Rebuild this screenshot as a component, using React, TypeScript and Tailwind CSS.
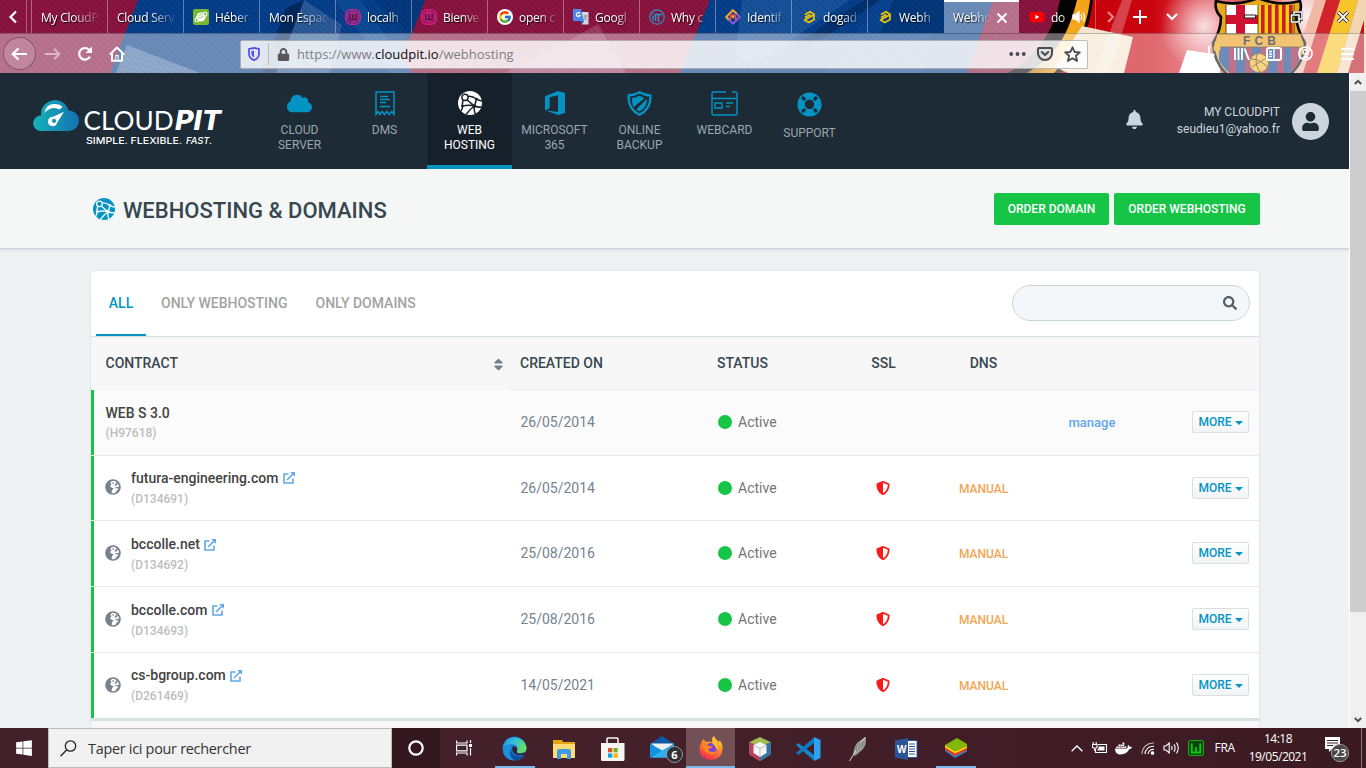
import React from "react";
import {
  FaBell,
  FaCloud,
  FaDocker,
  FaLifeRing,
  FaLock,
  FaSearch,
  FaShieldAlt,
  FaSort,
  FaUser,
  FaWindows,
  FaYoutube,
} from "react-icons/fa";
import { FcGoogle } from "react-icons/fc";

/* ---------- Browser theme artwork ---------- */

function ThemeArt() {
  return (
    <svg className="absolute inset-0" width="1366" height="73" viewBox="0 0 1366 73">
      <defs>
        <pattern id="hatch" width="6" height="6" patternUnits="userSpaceOnUse">
          <path d="M-1 -1L7 7M-1 5L1 7M5 -1L7 1" stroke="#000" strokeOpacity=".24" strokeWidth=".8" />
        </pattern>
        <linearGradient id="red" x1="0" x2="1">
          <stop offset="0" stopColor="#c40006" />
          <stop offset=".3" stopColor="#cb0510" />
          <stop offset=".48" stopColor="#dc3a46" />
          <stop offset=".8" stopColor="#f0a8a8" />
          <stop offset="1" stopColor="#c81420" />
        </linearGradient>
        <linearGradient id="gold" x1="0" x2="1">
          <stop offset="0" stopColor="#b96800" />
          <stop offset=".1" stopColor="#f7a81c" />
          <stop offset="1" stopColor="#c97400" />
        </linearGradient>
        <radialGradient id="glow" cx=".5" cy=".5" r=".5">
          <stop offset="0" stopColor="#fff" stopOpacity=".85" />
          <stop offset="1" stopColor="#fff" stopOpacity="0" />
        </radialGradient>
        <clipPath id="crestClip">
          <path d="M1217 3H1299L1296 17L1303 44Q1302 66 1287 74H1231Q1215 62 1215 44L1222 17Z" />
        </clipPath>
      </defs>
      <rect width="1366" height="73" fill="#8b1540" />
      <path d="M138 0H425L395 73H110Z" fill="#063f8b" />
      <path d="M710 0H993L967 73H680Z" fill="#063f8b" />
      <path d="M127 45L200 73H116Z" fill="#456fa8" />
      <path d="M304 0L342 25L330 73H276Z" fill="#2b5a9b" />
      <path d="M286 8L304 0L276 73H262Z" fill="#03295f" />
      <path d="M335 0H360L412 73H390Z" fill="#0c4b98" />
      <path d="M375 0H425L410 38Z" fill="#04397f" />
      <path d="M570 40L598 24L626 73H505Z" fill="#a03a61" />
      <path d="M742 0H850L752 66L735 55Z" fill="#17529a" />
      <path d="M864 0L880 0L794 58L780 54Z" fill="#03306f" />
      <path d="M880 0H940L922 73H824Z" fill="#084491" />
      <path d="M893 0H944V33H880Z" fill="#04387d" />
      <rect width="1090" height="73" fill="url(#hatch)" />
      <path d="M1060 0H1366V73H1008C1040 53 1054 29 1060 0Z" fill="#050303" />
      <path d="M1077 0H1366V73H1027C1060 54 1070 28 1077 0Z" fill="url(#gold)" />
      <path d="M1090 0H1366V73H1054C1078 48 1087 26 1090 0Z" fill="#140400" />
      <path d="M1093 0H1366V73H1061C1083 47 1090 26 1093 0Z" fill="url(#red)" />
      <path d="M1082 26L1133 37L1124 73H1068L1055 67Z" fill="#f4e5ce" />
      <path d="M1112 26L1122 0H1132L1110 73H1095Z" fill="#fff" opacity=".25" />
      <path d="M1187 50L1220 55V73H1179Z" fill="#fff" />
      <ellipse cx="1204" cy="26" rx="44" ry="46" fill="url(#glow)" />
      <ellipse cx="1309" cy="16" rx="36" ry="40" fill="url(#glow)" />
      <path d="M1315 0H1326L1305 73H1290Z" fill="#f2b8a6" />
      <path d="M1340 0H1358L1337 73H1317Z" fill="#f7c52a" />
      <path d="M1326 0H1340L1317 73H1303Z" fill="#d1242a" />
      <path d="M1358 0H1366V73H1337Z" fill="#f2d6b4" />
      <path d="M1364 20V73H1348Z" fill="#b91420" />
      {/* club crest */}
      <path
        d="M1216 1Q1237 7 1258 -2Q1280 7 1300 1Q1303 11 1296 17Q1297 29 1305 43Q1304 64 1288 76H1229Q1214 64 1213 43Q1221 30 1221 17Q1214 10 1216 1Z"
        fill="#eaa81f"
        stroke="#060606"
        strokeWidth="2.6"
      />
      <g clipPath="url(#crestClip)">
        <rect x="1226" y="5" width="32" height="29" fill="#fff" />
        <rect x="1236" y="5" width="9" height="29" fill="#ce1130" />
        <rect x="1226" y="15" width="32" height="9" fill="#ce1130" />
        <rect x="1258" y="5" width="36" height="29" fill="#f6d20d" />
        {[1261, 1268, 1275, 1282, 1289].map((x) => (
          <rect key={x} x={x} y="5" width="3.6" height="29" fill="#d01c28" />
        ))}
        <rect x="1214" y="34" width="90" height="13" fill="#e99c16" />
        <rect x="1219" y="47" width="80" height="27" fill="#0a3f8c" />
        {[1229, 1245, 1261, 1277, 1291].map((x) => (
          <rect key={x} x={x} y="47" width="7" height="27" fill="#93163f" />
        ))}
      </g>
      <path d="M1226 5V34M1258 5V34M1294 5V34M1218 34H1300M1216 47H1303" stroke="#3a2500" strokeWidth=".8" />
      <text x="1243" y="45" fontSize="12" fontWeight="700" fontFamily="Liberation Sans, sans-serif" fill="#0c0c0c" textLength="33">
        FCB
      </text>
      <circle cx="1259" cy="63" r="9.5" fill="#f2b735" stroke="#6b4100" strokeWidth="1" />
      <path d="M1251 59Q1260 59 1267 67M1252 67Q1260 62 1266 58M1257 54Q1254 64 1260 72" stroke="#5a3600" strokeWidth="1" fill="none" />
      <circle cx="1217" cy="48" r="3.5" fill="#f5a300" />
    </svg>
  );
}

/* ---------- Favicons ---------- */

const HostIcon = () => (
  <svg width="16" height="16" viewBox="0 0 16 16">
    <rect width="16" height="16" rx="2" fill="#78b833" />
    <ellipse cx="8" cy="8" rx="7" ry="2.4" transform="rotate(-35 8 8)" fill="none" stroke="#fff" strokeWidth="1.1" />
    <circle cx="8" cy="8" r="4.5" fill="#fff" />
    <path d="M5.5 6.5Q8 6 10 4.8M5 9Q8 9 11.2 7" stroke="#78b833" strokeWidth=".7" fill="none" />
  </svg>
);
const WampIcon = () => (
  <svg width="16" height="16" viewBox="0 0 16 16">
    <rect x=".8" y=".8" width="14.4" height="14.4" rx="5" fill="none" stroke="#d01f86" strokeWidth="1.6" />
    <circle cx="8" cy="8" r="6.2" fill="#d01f86" fillOpacity=".75" />
    <path d="M4.8 5V10.6H11.2V5M8 5.6V10.6" fill="none" stroke="#4a1440" strokeWidth="1.4" />
  </svg>
);
const GoogleIcon = () => (
  <div className="flex h-4 w-4 items-center justify-center rounded-full bg-white">
    <FcGoogle size={14} />
  </div>
);
const TranslateIcon = () => (
  <svg width="16" height="16" viewBox="0 0 16 16">
    <path d="M7 3H15.5V15.5H9Z" fill="#d6d8db" />
    <path d="M0 0H8L11 12H0Z" fill="#4b87ee" />
    <path d="M7.2 12H11L9 15.5Z" fill="#2b5fc0" />
    <path d="M7 4.4A2 2 0 1 0 7.2 6.5H5.2" fill="none" stroke="#fff" strokeWidth="1.1" />
    <path d="M10.8 7H14.7M12.7 6V7Q12.7 10 10.7 11M11.6 8.5Q12.5 10.5 14.5 11.3" fill="none" stroke="#7a7f85" strokeWidth=".8" />
  </svg>
);
const ItIcon = () => (
  <svg width="16" height="16" viewBox="0 0 16 16" fill="none" stroke="#2596c7">
    <circle cx="8" cy="8" r="7.2" strokeWidth="1.2" />
    <path d="M4.2 6.5V11.5M6.6 12V5.5H13M9.5 5.5V13" strokeWidth="1.5" />
    <path d="M4.2 4V5" strokeWidth="1.5" />
  </svg>
);
const IdIcon = () => (
  <svg width="16" height="16" viewBox="0 0 16 16" fill="none">
    <path d="M4 11L1.2 8L8 1.2L12 5" stroke="#f5a13a" strokeWidth="2.1" strokeLinejoin="round" />
    <path d="M12 5L14.8 8L8 14.8L4 11" stroke="#8258d8" strokeWidth="2.1" strokeLinejoin="round" />
    <path d="M5.5 11V8A2.6 2.6 0 0 1 10.6 8V11" stroke="#ef5350" strokeWidth="1.8" />
    <circle cx="8" cy="8" r="1.2" fill="#ffb347" />
  </svg>
);
const DogadoIcon = () => (
  <svg width="16" height="16" viewBox="0 0 16 16" fill="none" stroke="#f2c500" strokeWidth="1.7" strokeLinejoin="round">
    <path d="M4 5.5L9 2.7L13 5.2V10.5L8 13.4L3.5 11L12 6.2M4 8.4L9.3 5.5" />
  </svg>
);
const TubeIcon = () => (
  <span className="relative flex h-4 w-4 items-center justify-center">
    <span className="absolute h-1.5 w-2 bg-white" />
    <FaYoutube className="relative" size={16} color="#ff0000" />
  </span>
);

interface TabInfo {
  label: string;
  icon?: React.FC;
  active?: boolean;
  audio?: boolean;
}

const browserTabs: TabInfo[] = [
  { label: "My CloudP" },
  { label: "Cloud Serv" },
  { label: "Héber", icon: HostIcon },
  { label: "Mon Espac" },
  { label: "localh", icon: WampIcon },
  { label: "Bienve", icon: WampIcon },
  { label: "open c", icon: GoogleIcon },
  { label: "Googl", icon: TranslateIcon },
  { label: "Why c", icon: ItIcon },
  { label: "Identif", icon: IdIcon },
  { label: "dogad", icon: DogadoIcon },
  { label: "Webh", icon: DogadoIcon },
  { label: "Webho", active: true },
  { label: "do", icon: TubeIcon, audio: true },
];

function BrowserTab({ tab }: { tab: TabInfo }) {
  const Icon = tab.icon;
  return (
    <div
      className={
        tab.active
          ? "ml-px flex h-[33px] w-[75px] shrink-0 items-center border-t-2 border-white bg-white/40 pr-[11px] pl-[9px]"
          : tab.audio
            ? "flex h-[33px] w-[76px] shrink-0 items-center pr-2 pl-[10px]"
            : "flex h-[33px] w-[76px] shrink-0 items-center border-l border-white/35 pr-1 pl-[9px]"
      }
    >
      {Icon && (
        <span className="mr-1.5 flex h-4 w-4 shrink-0 items-center">
          <Icon />
        </span>
      )}
      <span
        className={
          tab.active
            ? "min-w-0 flex-1 text-[12px] leading-5 tracking-[-0.3px] whitespace-nowrap text-white [mask-image:linear-gradient(to_right,black_50%,transparent_100%)] [text-shadow:1px_1px_1px_rgba(0,0,0,.8)]"
            : "min-w-0 flex-1 pt-0.5 text-[12px] leading-5 tracking-[-0.25px] whitespace-nowrap text-white [mask-image:linear-gradient(to_right,black_50%,transparent_98%)] [text-shadow:1px_1px_1px_rgba(0,0,0,.8)]"
        }
      >
        {tab.label}
      </span>
      {tab.active && (
        <svg className="ml-1 shrink-0" width="12" height="12" viewBox="0 0 12 12">
          <path d="M1.5 1.5L10.5 10.5M10.5 1.5L1.5 10.5" stroke="#fff" strokeWidth="1.9" />
        </svg>
      )}
      {tab.audio && (
        <svg className="shrink-0" width="15" height="14" viewBox="0 0 15 14" fill="none" stroke="#fff" strokeWidth="1.3">
          <path d="M1 5H3.5L7 2V12L3.5 9H1Z" fill="#fff" />
          <path d="M9 4.5Q10.6 7 9 9.5M11 2.5Q14 7 11 11.5" />
        </svg>
      )}
    </div>
  );
}

function BrowserChrome() {
  return (
    <div className="relative h-[73px] w-full shrink-0 font-['Open_Sans',sans-serif]">
      <ThemeArt />
      <div className="relative flex h-[33px]">
        <div className="flex w-[27px] items-center justify-center border-r border-white/30">
          <svg width="10" height="14" viewBox="0 0 10 14">
            <path d="M8 1.5L2.5 7L8 12.5" fill="none" stroke="#fff" strokeWidth="2.2" />
          </svg>
        </div>
        <div className="w-1" />
        {browserTabs.map((t, i) => (
          <BrowserTab key={i} tab={t} />
        ))}
        <div className="flex items-center border-l border-white/30 pl-[11px]">
          <svg width="8" height="12" viewBox="0 0 8 12">
            <path d="M1 1L6 6L1 11" fill="none" stroke="#fff" strokeOpacity=".55" strokeWidth="2" />
          </svg>
          <svg className="ml-[18px]" width="14" height="14" viewBox="0 0 14 14">
            <path d="M7 0V14M0 7H14" stroke="#fff" strokeWidth="2" />
          </svg>
          <svg className="ml-[19px]" width="12" height="8" viewBox="0 0 12 8">
            <path d="M1 1L6 6L11 1" fill="none" stroke="#fff" strokeWidth="2.2" />
          </svg>
          <svg className="ml-[66px]" width="12" height="6" viewBox="0 0 12 6">
            <path d="M.5 1H11.5V4H.5Z" fill="#fff" stroke="#222" strokeWidth="1" />
          </svg>
          <svg className="ml-[34px]" width="13" height="12" viewBox="0 0 13 12" fill="none">
            <path d="M4 3V1H12V8H9M1.5 4H9V11H1.5Z" stroke="#222" strokeWidth="3.4" />
            <path d="M4 3V1H12V8H9M1.5 4H9V11H1.5Z" stroke="#fff" strokeWidth="1.5" />
          </svg>
          <svg className="ml-[34px]" width="12" height="12" viewBox="0 0 12 12">
            <path d="M1 1L11 11M11 1L1 11" stroke="#222" strokeWidth="3.6" />
            <path d="M1 1L11 11M11 1L1 11" stroke="#fff" strokeWidth="1.8" />
          </svg>
        </div>
      </div>
      <div className="relative flex h-10 items-center border-t border-black/25 bg-white/40 pl-[3px]">
        <div className="flex h-[33px] w-[33px] shrink-0 items-center justify-center rounded-full border border-black/35 bg-white/15">
          <svg width="17" height="14" viewBox="0 0 17 14">
            <path d="M16 7H2M7.5 1.2L1.7 7L7.5 12.8" fill="none" stroke="#fff" strokeWidth="2.1" />
          </svg>
        </div>
        <svg className="ml-[9px] shrink-0" width="16" height="14" viewBox="0 0 17 14">
          <path d="M0 7H14M9.5 1.2L15.3 7L9.5 12.8" fill="none" stroke="#fff" strokeOpacity=".5" strokeWidth="2" />
        </svg>
        <svg className="ml-4 shrink-0" width="16" height="16" viewBox="0 0 16 16">
          <path d="M13 10.6A5.8 5.8 0 1 1 12.3 4" fill="none" stroke="#fff" strokeWidth="2.2" />
          <path d="M15 .5V7H8.5Z" fill="#fff" />
        </svg>
        <svg className="ml-4 shrink-0" width="16" height="16" viewBox="0 0 16 16">
          <path d="M.7 8.6L8 1.5L15.3 8.6M3 7V14.7H13V7" fill="none" stroke="#fff" strokeWidth="2" strokeLinejoin="round" />
          <path d="M6.3 9H9.7V15H6.3Z" fill="#fff" />
          <rect x="7.3" y="10.2" width="1.4" height="3.6" fill="#6c8bb6" />
        </svg>
        <div className="mt-px ml-[115px] flex h-[29px] w-[848px] shrink-0 items-center rounded-[2px] border border-black/25 bg-white/80 pl-[7px]">
          <svg width="12" height="14" viewBox="0 0 12 14">
            <path d="M6 .9L11 2V7Q11 11 6 13.2Q1 11 1 7V2Z" fill="none" stroke="#5a4be0" strokeWidth="1.7" />
            <path d="M6 3.4V10.6Q3.4 9 3.4 7V4Z" fill="#4759e4" />
          </svg>
          <div className="ml-2 h-[22px] w-px bg-gray-400/60" />
          <FaLock className="ml-[8px]" size={13} color="#58585c" />
          <span className="ml-[7px] text-[13px] leading-5 text-[#7f7f84]">
            https://www.<span className="text-[#0c0c0d]">cloudpit.io</span>/webhosting
          </span>
          <div className="ml-auto flex items-center gap-[11px] pr-[6px]">
            <svg width="17" height="4" viewBox="0 0 17 4" fill="#4a4a4f">
              <circle cx="2.2" cy="2" r="1.9" />
              <circle cx="8.5" cy="2" r="1.9" />
              <circle cx="14.8" cy="2" r="1.9" />
            </svg>
            <svg width="16" height="14" viewBox="0 0 16 14" fill="none" stroke="#4a4a4f" strokeWidth="2" strokeLinecap="round" strokeLinejoin="round">
              <path d="M2 1H14Q15 1 15 2V6A7 7 0 0 1 1 6V2Q1 1 2 1Z" />
              <path d="M4.8 5L8 8L11.2 5" />
            </svg>
            <svg width="17" height="17" viewBox="0 0 17 17">
              <path d="M8.5 1.3L10.6 6L15.8 6.4L11.9 9.8L13.1 15L8.5 12.2L3.9 15L5.1 9.8L1.2 6.4L6.4 6Z" fill="none" stroke="#4a4a4f" strokeWidth="1.8" strokeLinejoin="round" />
            </svg>
          </div>
        </div>
        <svg className="ml-auto" width="12" height="16" viewBox="0 0 12 16">
          <path d="M6 0V13M.8 8L6 13.2L11.2 8" fill="none" stroke="#fff" strokeWidth="2" />
        </svg>
        <svg className="ml-[19px]" width="16" height="14" viewBox="0 0 16 14">
          <path d="M1 1V13M4.5 1V13M8 1V13M10.5 1.5L15 13" stroke="#fff" strokeWidth="1.9" />
        </svg>
        <svg className="ml-4" width="16" height="14" viewBox="0 0 16 14">
          <rect x="1" y="1" width="14" height="12" rx="2" fill="none" stroke="#fff" strokeWidth="2" />
          <path d="M8 1V13M3 4.5H6M3 7H6M3 9.5H6" stroke="#fff" strokeWidth="1.3" />
        </svg>
        <svg className="ml-4" width="15" height="15" viewBox="0 0 15 15">
          <circle cx="7.5" cy="7.5" r="6.5" fill="none" stroke="#fff" strokeWidth="1.7" />
          <circle cx="7.5" cy="6" r="2.5" fill="none" stroke="#fff" strokeWidth="1.4" />
          <path d="M3.5 12Q7.5 8 11.5 12Z" fill="#fff" />
        </svg>
        <svg className="mr-[12px] ml-[28px]" width="13" height="12" viewBox="0 0 13 12">
          <path d="M0 1H13M0 6H13M0 11H13" stroke="#fff" strokeWidth="2" />
        </svg>
      </div>
    </div>
  );
}

/* ---------- Site header ---------- */

function Logo() {
  return (
    <svg width="192" height="50" viewBox="0 0 192 50">
      <defs>
        <linearGradient id="cloudFill" x1="0" x2="1">
          <stop offset="0" stopColor="#14b3b8" />
          <stop offset="1" stopColor="#1670b0" />
        </linearGradient>
      </defs>
      <path d="M7 32A7.8 7.8 0 0 1 6.5 16.6Q8.5 17 8 14.5A14 14 0 0 1 35.5 11.4A10.3 10.3 0 0 1 36 32Z" fill="url(#cloudFill)" />
      <path d="M11.4 14Q13 4.5 22.5 5Q27 5.2 29.6 8L26.6 10.6Q19 6.2 11.4 14Z" fill="#fff" />
      <path d="M31 12.8L24 24A4.6 4.6 0 1 1 19.4 18Z" fill="#fff" />
      <circle cx="21" cy="21.9" r="2.1" fill="#1c93b4" />
      <g fill="#fff">
        <text x="50.5" y="31" fontFamily="Lato, sans-serif" fontWeight="400" fontSize="26.5" textLength="90" lengthAdjust="spacingAndGlyphs">
          CLOUD
        </text>
        <text x="142" y="31" fontFamily="Inter, sans-serif" fontWeight="800" fontStyle="italic" fontSize="26.5" textLength="46" lengthAdjust="spacingAndGlyphs">
          PIT
        </text>
        <text x="53" y="44.6" fontFamily="Inter, sans-serif" fontWeight="500" fontSize="9.3" textLength="96" lengthAdjust="spacingAndGlyphs">
          SIMPLE. FLEXIBLE.
        </text>
        <text x="153" y="44.6" fontFamily="Inter, sans-serif" fontWeight="500" fontStyle="italic" fontSize="9.3" textLength="26" lengthAdjust="spacingAndGlyphs">
          FAST.
        </text>
      </g>
    </svg>
  );
}

/* Ball of separate patches divided by thin seams, with round joints. */
function NetBall({ size, color, line }: { size: number; color: string; line: string }) {
  return (
    <svg width={size} height={size} viewBox="0 0 24 24">
      <circle cx="12" cy="12" r="12" fill={color} />
      <g stroke={line} strokeWidth="1.5" fill="none">
        <path d="M9 5.5Q14 4.5 18.5 8Q21 9.5 24 10M5.5 8.5Q4 12 4.5 15Q4.5 18 3 20M8.5 8.5L16.5 15Q20 16.5 23.5 16M18.5 8Q17.5 12 16.5 15M16.5 15Q11 13.5 4.5 15M16.5 15Q15.5 19.5 17.5 23M16.5 15Q12 18 8 23.5" />
      </g>
      <circle cx="7" cy="6.4" r="3.1" fill={color} stroke={line} strokeWidth="1.4" />
      <circle cx="16.5" cy="15" r="1.7" fill={line} />
      <circle cx="4.5" cy="15" r="1.3" fill={line} />
      <circle cx="18.5" cy="8" r="1.3" fill={line} />
    </svg>
  );
}

const DmsIcon = () => (
  <svg width="20" height="25" viewBox="0 0 20 25" fill="none" stroke="#0494c4" strokeWidth="1.5">
    <path d="M1 23.5V1H19V23.5L16.7 20.5L14.3 23.5L12 20.5L9.6 23.5L7.3 20.5L5 23.5L3 20.5Z" />
    <path d="M5 5.5H13M5 8.5H15M5 11.5H11M5 15.5H15" />
  </svg>
);
const OfficeIcon = () => (
  <svg width="20" height="24" viewBox="0 0 20 24" fill="#0494c4">
    <path d="M0 5.2L13 0L20 2V22L13 24L0 19.3L13 21V4.3L4.6 6.3V17.2L0 19.3Z" />
  </svg>
);
const BackupIcon = () => (
  <svg width="25" height="25" viewBox="0 0 25 25">
    <path d="M12.5 1.3Q17.5 4.3 23.4 4.5Q24.3 18 12.5 23.7Q.7 18 1.6 4.5Q7.5 4.3 12.5 1.3Z" fill="none" stroke="#0494c4" strokeWidth="2.3" />
    <path d="M12.5 4.8Q15.5 6.4 17.6 6.9L6.4 16.2Q4.8 12 5 7Q9 6.8 12.5 4.8ZM20 7.7Q19.8 16.7 12.5 20.5Q10.8 19.8 9.4 18.2Z" fill="#0494c4" />
  </svg>
);
const WebcardIcon = () => (
  <svg width="27" height="25" viewBox="0 0 27 25" fill="none" stroke="#0494c4" strokeWidth="1.4">
    <path d="M15 1H2.5Q1 1 1 2.5V22.5Q1 24 2.5 24H24.5Q26 24 26 22.5V2.5Q26 1 24.5 1H21M1 7.5H26M4 12H11V17H4ZM15 12H22M15 15.5H19" />
  </svg>
);

const navItems: { label: string[]; icon: React.ReactNode; active?: boolean; low?: boolean }[] = [
  { label: ["CLOUD", "SERVER"], icon: <FaCloud size={25} color="#0494c4" /> },
  { label: ["DMS"], icon: <DmsIcon /> },
  { label: ["WEB", "HOSTING"], icon: <NetBall size={24} color="#ffffff" line="#15202a" />, active: true },
  { label: ["MICROSOFT", "365"], icon: <OfficeIcon /> },
  { label: ["ONLINE", "BACKUP"], icon: <BackupIcon /> },
  { label: ["WEBCARD"], icon: <WebcardIcon /> },
  { label: ["SUPPORT"], icon: <FaLifeRing size={25} color="#0494c4" />, low: true },
];

function SiteHeader() {
  return (
    <header className="flex h-24 shrink-0 bg-[#1c2b36]">
      <div className="w-[257px] pt-[26px] pl-[33px]">
        <Logo />
      </div>
      <nav className="flex">
        {navItems.map((n) => (
          <div
            key={n.label[0]}
            className={
              n.active
                ? "flex h-24 w-[85px] flex-col items-center border-b-4 border-[#0494c4] bg-[#15202a] pt-[18px] text-white"
                : "flex h-24 w-[85px] flex-col items-center pt-[18px] text-[#9ba6ae]"
            }
          >
            <div className={n.low ? "flex h-[35px] items-start pt-px" : "flex h-[32px] items-start"}>{n.icon}</div>
            <div className="text-center text-[12px] leading-[15px]">
              {n.label.map((l) => (
                <div key={l}>{l}</div>
              ))}
            </div>
          </div>
        ))}
      </nav>
      <div className="ml-auto flex items-center pr-[20px]">
        <FaBell className="-mt-[3px]" size={19} color="#ccd4dc" />
        <div className="ml-[33px] text-right text-[12px] leading-[17px] text-[#ccd4dc]">
          <div>MY CLOUDPIT</div>
          <div>seudieu1@yahoo.fr</div>
        </div>
        <div className="ml-3 flex h-[37px] w-[37px] items-center justify-center rounded-full bg-[#ccd4dc]">
          <FaUser size={19} color="#1c2b36" />
        </div>
      </div>
    </header>
  );
}

/* ---------- Contract table ---------- */

const EarthIcon = () => (
  <svg className="mb-0.5" width="16" height="16" viewBox="0 0 16 16">
    <circle cx="8" cy="8" r="7.8" fill="#76818c" />
    <path
      d="M8 1.8Q5.8 2.4 5.2 4L6.6 5L5 7.2L6.4 8.6L8.8 9.4L7 11L6.6 13.9Q8.4 14.6 10.4 13.8L11.6 11.8L12.8 10.8L13.6 9.6L11 9.2L9.6 8.4L14.1 7.8Q13.8 5.6 12.6 4.2L11.8 6.4L9.2 6.6L11 4.2L11.6 3.1Q10 2 8 1.8Z"
      fill="#fff"
    />
    <path d="M7.4 3.6L9 4.4" stroke="#76818c" strokeWidth="1.1" />
  </svg>
);
const LinkIcon = () => (
  <svg className="ml-[4.5px] mt-px" width="12" height="12" viewBox="0 0 12 12" fill="none" stroke="#62a8ea" strokeWidth="1.6">
    <path d="M5.5 2H1V11H10V6.5M4 8L10 2" />
    <path d="M7.2 0H12V4.8Z" fill="#62a8ea" stroke="none" />
  </svg>
);

const cols = "grid grid-cols-[419px_192px_144px_75px_125px_92px_121px] items-center";

const rows = [
  { name: "WEB S 3.0", id: "(H97618)", date: "26/05/2014", plan: true, cls: "h-[66px] bg-[#fbfbfb]", pad: "" },
  { name: "futura-engineering.com", id: "(D134691)", date: "26/05/2014", plan: false, cls: "h-[65px] bg-white", pad: "" },
  { name: "bccolle.net", id: "(D134692)", date: "25/08/2016", plan: false, cls: "h-[66px] bg-white", pad: " pt-[2px]" },
  { name: "bccolle.com", id: "(D134693)", date: "25/08/2016", plan: false, cls: "h-[66px] bg-white", pad: " pt-px" },
  { name: "cs-bgroup.com", id: "(D261469)", date: "14/05/2021", plan: false, cls: "h-[65px] bg-white", pad: "" },
];

function ContractTable() {
  return (
    <div>
      <div className={cols + " h-[53px] bg-[#f7f7f7] text-[14px] font-medium text-[#37474f]"}>
        <div className="flex items-center pr-[4.5px] pl-[14.5px]">
          <span>CONTRACT</span>
          <FaSort className="mt-px ml-auto" size={15} color="#76818c" />
        </div>
        <div className="flex h-full items-center border-b border-[#e9ebec] pl-2.5">CREATED ON</div>
        <div className="flex h-full items-center border-b border-[#e9ebec] pl-[15px]">STATUS</div>
        <div className="flex h-full items-center justify-center border-b border-[#e9ebec]">SSL</div>
        <div className="flex h-full items-center justify-center border-b border-[#e9ebec]">DNS</div>
        <div className="h-full border-b border-[#e9ebec]" />
        <div className="h-full border-b border-[#e9ebec]" />
      </div>
      {rows.map((r, i) => (
        <div key={r.id} className={"flex " + r.cls}>
          <div className={cols + (i < rows.length - 1 ? " w-full border-b border-[#e4eaec]" : " w-full") + " bg-[linear-gradient(to_right,#17c546_3px,transparent_3px)]"}>
            <div className="flex items-center pl-[14px]">
              {!r.plan && (
                <span className="mr-[10px]">
                  <EarthIcon />
                </span>
              )}
              <div className={r.plan ? "pl-[.5px]" : "" + r.pad}>
                <div className="flex items-center text-[14px] leading-5 font-medium text-[#434343]">
                  {r.name}
                  {!r.plan && <LinkIcon />}
                </div>
                <div className={r.plan ? "text-[12px] leading-5 font-medium text-[#bdbdbd]" : "pt-px text-[12px] leading-5 font-medium text-[#bdbdbd]"}>{r.id}</div>
              </div>
            </div>
            <div className="pl-[10.4px] text-[14px] text-[#76838f]">{r.date}</div>
            <div className="flex items-center pl-4 text-[14px] text-[#757575]">
              <span className="mr-[6px] mb-px h-[14px] w-[14px] rounded-full bg-[#17c546]" />
              Active
            </div>
            <div className="mb-px flex justify-center pr-px">{!r.plan && <FaShieldAlt size={14} color="#fb1a1a" />}</div>
            <div className="pt-px text-center text-[12px] font-medium text-[#f2a654]">{!r.plan && "MANUAL"}</div>
            <div className="text-center text-[13px] font-medium text-[#62a8ea]">{r.plan && "manage"}</div>
            <div className="mb-px flex justify-end pr-2.5">
              <button className="flex h-[22px] w-[57px] items-center justify-center rounded-[2px] border border-[#dbdfe2] bg-linear-to-b from-white to-[#f1f4f5] text-[12px] font-medium text-[#0494c4]">
                MORE
                <svg className="mt-0.5 ml-[3px]" width="8" height="4" viewBox="0 0 8 4">
                  <path d="M0 0H8L4 4Z" fill="#0494c4" />
                </svg>
              </button>
            </div>
          </div>
        </div>
      ))}
      <div className="h-[3px] bg-[#d5e1e1]" />
      <div className="h-10 bg-[#f7f7f7]" />
    </div>
  );
}

function Page() {
  return (
    <main className="flex h-full w-[1349px] flex-col overflow-hidden bg-[#eef2f3] font-[Roboto,sans-serif]">
      <SiteHeader />
      <div className="z-10 flex h-20 shrink-0 items-center border-b border-[#c9d5de] bg-[#f5f7f7] pr-[89px] pl-[93px] shadow-[0_1px_3px_rgba(0,0,0,.1)]">
        <NetBall size={22} color="#0494c4" line="#f5f7f7" />
        <h1 className="ml-2 pt-[3px] text-[22px] font-medium text-[#37474f]">WEBHOSTING &amp; DOMAINS</h1>
        <div className="ml-auto flex gap-[5px] text-[12px] font-medium text-white">
          <button className="h-8 w-[115px] rounded-[2px] bg-[#17c546]">ORDER DOMAIN</button>
          <button className="h-8 w-[146px] rounded-[2px] bg-[#17c546]">ORDER WEBHOSTING</button>
        </div>
      </div>
      <section className="mt-[22px] ml-[91px] w-[1168px] rounded-t-[2px] bg-white shadow-[0_0_2px_rgba(0,0,0,.15)]">
        <div className="flex h-[66px] border-b border-[#d5dfdf] pl-[5px] text-[14px] font-medium text-[#a3a3a3]">
          <div className="flex h-[65px] w-[50px] items-center justify-center border-b-2 border-[#0494c4] pt-0.5 text-[#0494c4]">ALL</div>
          <div className="flex h-[65px] items-center pl-[15px]">ONLY WEBHOSTING</div>
          <div className="flex h-[65px] items-center pl-7">ONLY DOMAINS</div>
          <div className="mt-[14px] mr-[9px] ml-auto flex h-9 w-[238px] items-center justify-end rounded-full border border-[#ccd5dc] bg-[#f3f7fa] pr-3">
            <FaSearch size={14} color="#526069" />
          </div>
        </div>
        <ContractTable />
      </section>
    </main>
  );
}

function Scrollbar() {
  return (
    <div className="flex w-[17px] flex-col border-l border-white bg-[#f0f0f0]">
      <div className="flex h-[18px] items-center justify-center">
        <svg width="8" height="6" viewBox="0 0 8 6">
          <path d="M.8 5L4 1.8L7.2 5" fill="none" stroke="#505050" strokeWidth="2" />
        </svg>
      </div>
      <div className="h-[521px] bg-[#cdcdcd]" />
      <div className="mt-auto flex h-[17px] items-center justify-center">
        <svg width="8" height="6" viewBox="0 0 8 6">
          <path d="M.8 1L4 4.2L7.2 1" fill="none" stroke="#505050" strokeWidth="2" />
        </svg>
      </div>
    </div>
  );
}

/* ---------- Taskbar ---------- */

const EdgeIcon = () => (
  <svg width="25" height="25" viewBox="0 0 25 25">
    <defs>
      <linearGradient id="edgeTop" x1="0" y1=".2" x2="1" y2=".5">
        <stop offset="0" stopColor="#1e9be2" />
        <stop offset=".5" stopColor="#35c1d8" />
        <stop offset="1" stopColor="#6ddf59" />
      </linearGradient>
    </defs>
    <circle cx="12.5" cy="12.5" r="12" fill="#1577cf" />
    <path d="M.8 12A12 12 0 0 1 24.5 11Q25 17 18 17Q13.5 17 15.3 14Q16 9 11 8.5Q4 8 .8 12Z" fill="url(#edgeTop)" />
    <path d="M9.4 12Q5 19 12 24.4Q4 24 1.3 17Q0 9 9 8.5Z" fill="#1d8fdd" />
    <path d="M9.6 13Q8 20 17 20.5Q20.5 20.2 22.5 18.6Q19 24 13 24.5Q6 21 9.6 13Z" fill="#104f97" />
    <path d="M10.2 11.5Q14 9 15.4 13.6Q14 15.5 15 17Q17 19 24.8 16L22.6 18.7Q10 21 10.2 11.5Z" fill="#3b1d25" />
  </svg>
);
const FolderIcon = () => (
  <svg width="22" height="19" viewBox="0 0 22 19">
    <path d="M0 0H9L10 2H22V18H0Z" fill="#e5a50f" />
    <path d="M0 4H22V18H0Z" fill="#fddc75" />
    <path d="M4 11Q4 9 6 9H16Q18 9 18 11V19H14V14H8V19H4Z" fill="#3f9be2" />
  </svg>
);
const StoreIcon = () => (
  <svg width="24" height="25" viewBox="0 0 24 25">
    <path d="M6 7V2Q6 1 7 1H16Q17 1 17 2V7" fill="none" stroke="#f5f5f5" strokeWidth="1.6" />
    <path d="M0 6H23.5V22.5Q23.5 24 22 24H1.5Q0 24 0 22.5Z" fill="#f5f5f5" />
    <path d="M7 11H11.3V15.3H7Z" fill="#e8502a" />
    <path d="M12.4 11H16.7V15.3H12.4Z" fill="#79b51c" />
    <path d="M7 16.4H11.3V20.7H7Z" fill="#18a2e8" />
    <path d="M12.4 16.4H16.7V20.7H12.4Z" fill="#f8b800" />
  </svg>
);
const MailIcon = () => (
  <svg className="ml-[11px]" width="35" height="28" viewBox="0 0 35 28">
    <path d="M0 9L12 1L24 9V22H0Z" fill="#0d5ba5" />
    <path d="M1 8.5H23.5L12 18Z" fill="#f1f1f1" />
    <path d="M0 8.8L12.5 15.5L0 22Z" fill="#1492dd" />
    <path d="M24 8.8L11 16L0 22.8H24Z" fill="#2fb0ee" />
    <circle cx="24.5" cy="19.5" r="8" fill="#2e3033" stroke="#999" />
    <text x="24.5" y="23.5" textAnchor="middle" fontSize="11" fontWeight="700" fontFamily="Open Sans, sans-serif" fill="#fff">
      6
    </text>
  </svg>
);
const FirefoxIcon = () => (
  <svg width="24" height="24" viewBox="0 0 24 24">
    <defs>
      <linearGradient id="fox" x1=".8" y1="0" x2=".3" y2="1">
        <stop offset="0" stopColor="#ffe13a" />
        <stop offset=".45" stopColor="#ff8a25" />
        <stop offset="1" stopColor="#f3265b" />
      </linearGradient>
    </defs>
    <path d="M4.5 3Q6 5.5 7.2 6Q10 5 13.3 6Q12 2 15 0Q16 3 20 6Q21 5.5 20.4 4Q24 8 23.6 13Q22.5 23.5 12 24Q1 23.5 .5 13Q.5 8 4.5 3Z" fill="url(#fox)" />
    <circle cx="12.5" cy="12.5" r="5.8" fill="#7a45d3" />
    <path d="M3 9Q7 7 10 10L14 10.5Q13 12.5 9.5 12.6Q9.5 16 13 16Q16 16 18 14.5Q15 20 10 18Q4 16 3 9Z" fill="#ff8420" />
    <path d="M15 5Q20 8 18 15Q17 10 13 7Z" fill="#ffc22d" />
  </svg>
);
const NetbeansIcon = () => (
  <svg width="22" height="24" viewBox="0 0 22 24">
    <path d="M11 0L21.5 5V17.5L11 24L.5 17.5V5Z" fill="#a5bd4e" />
    <path d="M.5 5L5 7V16L11 20V24L.5 17.5Z" fill="#bf3c64" />
    <path d="M21.5 5L17 7V16L11 20V24L21.5 17.5Z" fill="#2f74a7" />
    <path d="M11 5L17.5 8.2V16L11 20L4.5 16V8.2Z" fill="#f5f6f7" />
    <path d="M4.5 8.2L11 11.4L17.5 8.2M11 11.4V20" stroke="#b8bfc2" fill="none" />
  </svg>
);
const CodeIcon = () => (
  <svg width="25" height="24" viewBox="0 0 25 24">
    <path d="M0 8L2.4 6L18.5 18.3V24Z" fill="#1485ce" />
    <path d="M0 16L2.4 18L18.5 5.7V0Z" fill="#0f79c2" />
    <path d="M18 0L24.5 3V21L18 24Z" fill="#2aa2ee" />
  </svg>
);
const FeatherIcon = () => (
  <svg width="18" height="24" viewBox="0 0 18 24">
    <path d="M16.5 0Q18.5 8 12 14L6 19L4.2 17Q5 9 9 5Z" fill="#9a9a9a" />
    <path d="M16.5 0Q10 6 5.5 16L.5 24" stroke="#dcdcdc" fill="none" />
    <path d="M8 8L7 14M11 5L9.5 11M14 4L13 10" stroke="#777" />
  </svg>
);
const WordIcon = () => (
  <svg width="23" height="22" viewBox="0 0 23 22">
    <path d="M12 2.5H22V19.5H12Z" fill="#fff" stroke="#2a5699" />
    <path d="M14 6H20M14 8.5H20M14 11H20M14 13.5H20M14 16H20" stroke="#2a5699" strokeWidth="1.2" />
    <path d="M0 2.5L13 0V22L0 19.5Z" fill="#2a5699" />
    <text x="2" y="15" fontSize="11" fontWeight="700" fontFamily="Liberation Sans, sans-serif" fill="#fff" textLength="9.5" lengthAdjust="spacingAndGlyphs">
      W
    </text>
  </svg>
);
const StackIcon = () => (
  <svg width="22" height="20" viewBox="0 0 22 20">
    <path d="M0 10L10 17L22 12V13.5L10 20L0 13Z" fill="#2f7fd8" />
    <path d="M0 8.5L10 15L22 10V12L10 18L0 11.5Z" fill="#e33b22" />
    <path d="M0 7L10 13L22 8V10L10 15.5L0 9.5Z" fill="#ffd200" />
    <path d="M0 7L12 0L22 6V8L10 13Z" fill="#82b80b" />
  </svg>
);

const apps: { icon: React.ReactNode; state?: "open" | "focus" }[] = [
  { icon: <EdgeIcon />, state: "open" },
  { icon: <FolderIcon /> },
  { icon: <StoreIcon /> },
  { icon: <MailIcon /> },
  { icon: <FirefoxIcon />, state: "focus" },
  { icon: <NetbeansIcon /> },
  { icon: <CodeIcon /> },
  { icon: <FeatherIcon /> },
  { icon: <WordIcon /> },
  { icon: <StackIcon />, state: "open" },
];

function Taskbar() {
  return (
    <footer className="flex h-10 shrink-0 bg-linear-to-r from-[#42202a] via-[#44202a] to-[#3c1a22] font-['Open_Sans',sans-serif] text-white">
      <div className="flex w-12 items-center justify-center">
        <FaWindows size={18} />
      </div>
      <div className="flex w-[344px] items-center border border-[#bcbcbc] bg-[#f1f1f1] pl-[11px]">
        <svg width="17" height="17" viewBox="0 0 17 17">
          <circle cx="10.5" cy="6" r="5.2" fill="none" stroke="#222" strokeWidth="1.3" />
          <path d="M6.8 9.8L.5 16.3" stroke="#222" strokeWidth="1.3" />
        </svg>
        <span className="ml-[11px] pt-px text-[14.4px] tracking-[-0.27px] text-[#333]">Taper ici pour rechercher</span>
      </div>
      <div className="flex w-12 items-center justify-center bg-[#33191f]">
        <svg width="16" height="16" viewBox="0 0 16 16">
          <circle cx="8" cy="8" r="6.7" fill="none" stroke="#fff" strokeWidth="2.2" />
        </svg>
      </div>
      <div className="flex w-[50px] items-center justify-center">
        <svg className="mr-px" width="17" height="16" viewBox="0 0 17 16" fill="none" stroke="#fff" strokeWidth="1.2">
          <path d="M.6 .5V3H11V.5M.6 5.2H11V10.8H.6ZM.6 15.5V13H11V15.5M14.5 0V3M14.5 8V15.5" />
          <rect x="13" y="4" width="3" height="3" fill="#fff" stroke="none" />
        </svg>
      </div>
      <div className="flex">
        {apps.map((a, i) => (
          <div
            key={i}
            className={
              a.state === "focus"
                ? "flex h-10 w-[49px] items-center justify-center border-b-2 border-[#76b9ed] bg-[#735056]"
                : "flex h-10 w-[49px] flex-col items-center"
            }
          >
            <div className="flex flex-1 items-center justify-center pt-0.5">{a.icon}</div>
            {a.state === "open" && <div className="h-0.5 w-10 bg-[#76b9ed]" />}
          </div>
        ))}
      </div>
      <div className="ml-auto flex items-center">
        <svg width="12" height="7" viewBox="0 0 12 7">
          <path d="M.6 6.3L6 1L11.4 6.3" fill="none" stroke="#fff" strokeWidth="1.3" />
        </svg>
        <svg className="ml-[9px]" width="16" height="12" viewBox="0 0 16 12" fill="none" stroke="#fff" strokeWidth="1.1">
          <path d="M6 2.5H14.5V10.5H3.5V7M1.2 0V2.5M4.2 0V2.5M.5 2.5H5V5Q5 6 4 6H1.5Q.5 6 .5 5ZM2.7 6V9" />
          <path d="M6.5 4.5H12.5V8.5H5.5V7H6.5Z" fill="#fff" stroke="none" />
        </svg>
        <FaDocker className="ml-[7px]" size={17} />
        <svg className="ml-[9px]" width="14" height="13" viewBox="0 0 14 13" fill="none" stroke="#fff" strokeWidth="1.1">
          <path d="M1 12A11 11 0 0 1 13 1" opacity=".7" />
          <path d="M4 12A8 8 0 0 1 13 4.3M7 12A5 5 0 0 1 13 7.5" />
          <circle cx="11.5" cy="11" r="1.3" fill="#fff" />
        </svg>
        <svg className="ml-2" width="17" height="14" viewBox="0 0 17 14" fill="none" stroke="#fff" strokeWidth="1.1">
          <path d="M1 5H3L6.2 2V12L3 9H1ZM8.5 5Q9.7 7 8.5 9M11 3.4Q13.3 7 11 10.6M13.5 1.6Q17 7 13.5 12.4" />
        </svg>
        <svg className="ml-2" width="16" height="16" viewBox="0 0 16 16">
          <rect x=".5" y=".5" width="15" height="15" rx="1.5" fill="#064509" stroke="#0cae14" />
          <path d="M3.8 3.5V12.5H12.2V3.5M8 7V12" fill="none" stroke="#0ec818" strokeWidth="1.8" />
        </svg>
        <span className="ml-[10px] text-[12px] tracking-[-0.2px]">FRA</span>
        <div className="ml-[13px] w-[60px] text-center text-[12px] leading-[18px] tracking-[-0.5px]">
          <div>14:18</div>
          <div className="whitespace-nowrap">19/05/2021</div>
        </div>
        <svg className="ml-[16px]" width="28" height="28" viewBox="0 0 28 28">
          <path d="M1 3H16V15H8L5 18V15H1Z" fill="#fff" />
          <path d="M3 6.5H14M3 9H14M3 11.5H9" stroke="#42202a" />
          <circle cx="16" cy="19" r="8.6" fill="#4a4749" stroke="#999" />
          <text x="16" y="23.2" textAnchor="middle" fontSize="11.5" fontWeight="600" fontFamily="Open Sans, sans-serif" fill="#fff">
            23
          </text>
        </svg>
        <div className="ml-[9px] h-10 w-[5px] border-l border-[#8b747a]" />
      </div>
    </footer>
  );
}

export default function App() {
  return (
    <div className="flex h-[768px] w-[1366px] flex-col overflow-hidden">
      <BrowserChrome />
      <div className="flex h-[655px] shrink-0">
        <Page />
        <Scrollbar />
      </div>
      <Taskbar />
    </div>
  );
}
